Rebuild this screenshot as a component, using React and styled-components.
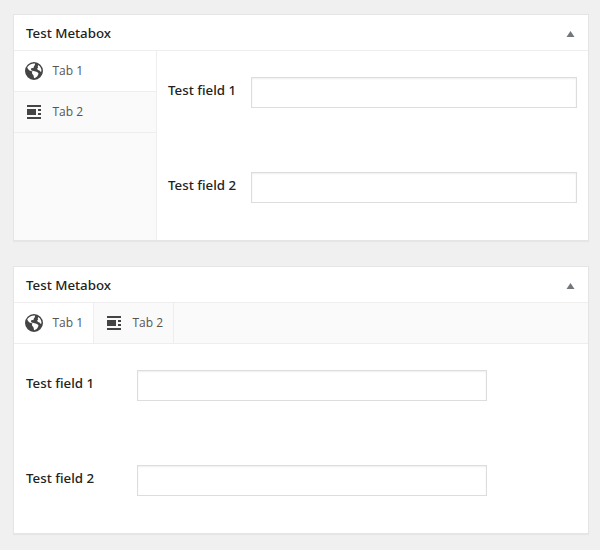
import React, { useState } from "react";
import styled, { createGlobalStyle, css } from "styled-components";

const GlobalStyle = createGlobalStyle`
  * {
    box-sizing: border-box;
  }
  body {
    margin: 0;
    background: #f0f0f0;
    font-family: "Noto Sans", "Open Sans", sans-serif;
    font-size: 13px;
    color: #222;
  }
`;

const fields = [
  { id: "field_1", label: "Test field 1" },
  { id: "field_2", label: "Test field 2" },
];

function GlobeIcon() {
  return (
    <Icon viewBox="0 0 18 18" $size={18}>
      <path
        fillRule="evenodd"
        d="M9 0a9 9 0 1 0 0 18A9 9 0 0 0 9 0z
          M10 1.400C6.800 1.200 3.900 2.700 2.200 5.300l.8 1.700 1.500 1.600 3 .9c-.9.9-.6 2 .3 2.900 1.200 1 .7 2.500 1.500 3.900 2.200-.6 3.900-2.600 4.200-4.700-.3-1.300-1.800-1.700-3-2.100-1.300-.3-2.200-.8-3.500-.8-.8-.4-1.200-1.100-1-1.900.4-.8 1.200-1 2-.6.800-.1.500-1.300 1-1.900.5-.7 1.100-1.600 1-2.900z
          M13.200 3l-.5 1.400.5.8-1.100 1.500.9 1.400 1.500.3.9 1.300 1-.2C16.800 7.200 15.600 4.600 13.200 3z"
      />
    </Icon>
  );
}

function AlignIcon() {
  return (
    <Icon viewBox="0 0 18 18" $size={18}>
      <path d="M2 2h14v2H2zM2 6h9v6H2zM13 6h3v2h-3zM13 10h3v2h-3zM2 14h14v2H2z" />
    </Icon>
  );
}

const tabs = [
  { id: "tab_1", label: "Tab 1", icon: GlobeIcon },
  { id: "tab_2", label: "Tab 2", icon: AlignIcon },
];

function Metabox({ vertical }) {
  const [active, setActive] = useState("tab_1");
  return (
    <Box>
      <Header>
        <Title>Test Metabox</Title>
        <Toggle viewBox="0 0 8 6">
          <path d="M4 0L8 6H0z" />
        </Toggle>
      </Header>
      <Content $vertical={vertical}>
        <TabList $vertical={vertical}>
          {tabs.map(({ id, label, icon: TabIcon }) => (
            <Tab
              key={id}
              $vertical={vertical}
              $active={active === id}
              onClick={() => setActive(id)}
            >
              <TabIcon />
              <TabLabel>{label}</TabLabel>
            </Tab>
          ))}
        </TabList>
        <Panel $vertical={vertical}>
          {fields.map((field) => (
            <Field key={field.id} $vertical={vertical}>
              <Label>{field.label}</Label>
              <Input type="text" />
            </Field>
          ))}
        </Panel>
      </Content>
    </Box>
  );
}

export default function App() {
  return (
    <Page>
      <GlobalStyle />
      <Metabox vertical />
      <Metabox />
    </Page>
  );
}

const Page = styled.div`
  display: flex;
  flex-direction: column;
  gap: 25px;
  width: 600px;
  height: 550px;
  padding: 14px 11px 0 13px;
`;
const Box = styled.div`
  background: #fff;
  border: 1px solid #e5e5e5;
  box-shadow: 0 1px 1px rgba(0, 0, 0, 0.04);
`;
const Header = styled.div`
  display: flex;
  align-items: center;
  justify-content: space-between;
  height: 36px;
  padding: 0 13px 0 12px;
  border-bottom: 1px solid #eee;
`;
const Title = styled.h2`
  margin: 0;
  font-size: 13.3px;
  font-weight: 500;
  line-height: 18px;
`;
const Toggle = styled.svg`
  width: 9px;
  height: 6px;
  margin-top: 3px;
  fill: #72777c;
`;
const Content = styled.div`
  display: flex;
  flex-direction: ${(props) => (props.$vertical ? "row" : "column")};
`;
const TabList = styled.div`
  display: flex;
  background: #fafafa;
  ${(props) =>
    props.$vertical
      ? css`
          flex-direction: column;
          width: 143px;
          border-right: 1px solid #eee;
        `
      : css`
          border-bottom: 1px solid #eee;
        `}
`;
const Tab = styled.div`
  display: flex;
  align-items: center;
  gap: 9.5px;
  height: ${(props) => (props.$vertical ? "41px" : "40px")};
  width: ${(props) => (props.$vertical ? "auto" : "80px")};
  padding-left: 11px;
  white-space: nowrap;
  color: #555;
  cursor: pointer;
  background: ${(props) => (props.$active ? "#fff" : "transparent")};
  border: 0 solid #eee;
  border-width: ${(props) => (props.$vertical ? "0 0 1px" : "0 1px 0 0")};
`;
const TabLabel = styled.span`
  font-family: "Open Sans", "Noto Sans", sans-serif;
  font-size: 12px;
  line-height: 18px;
`;
const Icon = styled.svg`
  flex: none;
  width: ${(props) => props.$size}px;
  height: ${(props) => props.$size}px;
  fill: #444;
`;
const Panel = styled.div`
  flex: 1;
  display: flex;
  flex-direction: column;
  gap: 64px;
  padding: ${(props) => (props.$vertical ? "26px 11px 37px" : "26px 12px 37px")};
`;
const Field = styled.div`
  display: grid;
  align-items: start;
  grid-template-columns: ${(props) =>
    props.$vertical ? "83px 326px" : "111px 350px"};
`;
const Label = styled.label`
  padding-top: 4px;
  font-size: 13.3px;
  font-weight: 500;
  line-height: 18px;
  white-space: nowrap;
`;
const Input = styled.input`
  display: block;
  width: 100%;
  height: 31px;
  padding: 3px 5px;
  border: 1px solid #ddd;
  border-radius: 0;
  outline: 0;
  background: #fff;
  box-shadow: inset 0 1px 2px rgba(0, 0, 0, 0.07);
`;
